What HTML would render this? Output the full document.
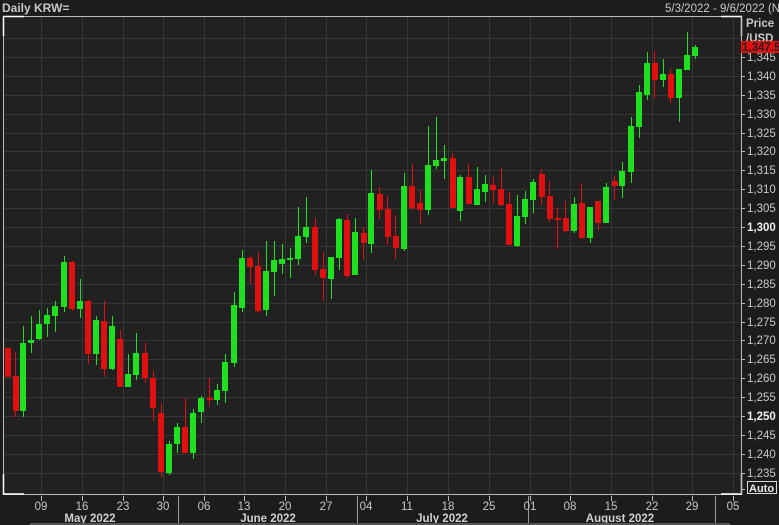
<!DOCTYPE html>
<html><head><meta charset="utf-8"><style>
html,body{margin:0;padding:0;background:#1c1c1c;width:779px;height:525px;overflow:hidden}
svg{display:block;font-family:"Liberation Sans",sans-serif}
</style></head><body>
<svg width="779" height="525" viewBox="0 0 779 525" xmlns="http://www.w3.org/2000/svg">
<rect width="779" height="525" fill="#1c1c1c"/>
<rect x="3" y="16" width="738" height="478" fill="#212121"/>
<g stroke="#363636" stroke-width="1">
<path d="M3 38.5H741M3 57.5H741M3 76.5H741M3 95.5H741M3 114.5H741M3 133.5H741M3 151.5H741M3 170.5H741M3 189.5H741M3 208.5H741M3 227.5H741M3 246.5H741M3 265.5H741M3 284.5H741M3 303.5H741M3 322.5H741M3 340.5H741M3 359.5H741M3 378.5H741M3 397.5H741M3 416.5H741M3 435.5H741M3 454.5H741M3 473.5H741"/>
<path d="M41.5 16V494M82.5 16V494M123.5 16V494M163.5 16V494M204.5 16V494M244.5 16V494M285.5 16V494M326.5 16V494M366.5 16V494M407.5 16V494M448.5 16V494M489.5 16V494M530.5 16V494M570.5 16V494M611.5 16V494M652.5 16V494M692.5 16V494M733.5 16V494"/>
</g>
<g stroke="#bbb" fill="none">
<path d="M3.5 494V16.5H741.5V494.5H3.5"/>
</g>
<g stroke="#fff" stroke-width="1.5" fill="none">
<path d="M3.5 36V16.5H24M721 16.5H741.5V36M3.5 474V494H24M721 494H741.5V474"/>
</g>
<!-- red wicks -->
<g stroke="#e01010" stroke-width="1">
<path d="M7.5 348V377M15.5 352V417M72.5 261V311M88.5 300V364M104.5 301V377M120.5 330V387M145.5 343V383M153.5 371V421M161.5 403V477M185.5 398V453M209.5 378V407M250.5 256V284M258.5 252V313M315.5 218V275M323.5 252V301M347.5 214V278M363.5 227V260M379.5 187V219M387.5 196V245M395.5 215V259M412.5 164V210M420.5 190V224M452.5 153V208M468.5 164V205M493.5 177V203M501.5 168V206M509.5 192V245M541.5 169V205M549.5 181V222M557.5 207V249M565.5 201V233M581.5 183V238M598.5 201V230M614.5 176V200M654.5 51V98M670.5 69V103"/>
</g>
<g fill="#e01010">
<rect x="5" y="348" width="6" height="29"/><rect x="13" y="376" width="6" height="35"/><rect x="69" y="262" width="6" height="47"/><rect x="85" y="301" width="6" height="53"/><rect x="101" y="321" width="6" height="48"/><rect x="117" y="339" width="6" height="48"/><rect x="142" y="353" width="6" height="25"/><rect x="150" y="378" width="6" height="30"/><rect x="158" y="413" width="6" height="59"/><rect x="182" y="427" width="6" height="26"/><rect x="207" y="398" width="6" height="2"/><rect x="247" y="258" width="6" height="9"/><rect x="255" y="266" width="6" height="45"/><rect x="312" y="227" width="6" height="43"/><rect x="320" y="269" width="6" height="9"/><rect x="344" y="220" width="6" height="56"/><rect x="361" y="233" width="6" height="10"/><rect x="377" y="194" width="6" height="16"/><rect x="385" y="209" width="6" height="28"/><rect x="393" y="236" width="6" height="12"/><rect x="409" y="186" width="6" height="22"/><rect x="417" y="203" width="6" height="7"/><rect x="450" y="158" width="6" height="50"/><rect x="466" y="177" width="6" height="27"/><rect x="490" y="185" width="6" height="5"/><rect x="498" y="189" width="6" height="16"/><rect x="506" y="204" width="6" height="41"/><rect x="539" y="174" width="6" height="23"/><rect x="547" y="196" width="6" height="23"/><rect x="555" y="218" width="6" height="2"/><rect x="563" y="218" width="6" height="13"/><rect x="579" y="203" width="6" height="35"/><rect x="595" y="201" width="6" height="22"/><rect x="612" y="181" width="6" height="5"/><rect x="652" y="63" width="6" height="17"/><rect x="668" y="74" width="6" height="24"/>
</g>
<!-- green wicks -->
<g stroke="#1ee01e" stroke-width="1">
<path d="M23.5 326V417M31.5 316V353M39.5 310V340M47.5 308V337M55.5 301V332M64.5 256V312M80.5 279V318M96.5 316V365M112.5 316V370M128.5 354V387M136.5 333V380M169.5 441V475M177.5 423V453M193.5 409V459M201.5 396V423M217.5 384V405M225.5 354V403M234.5 292V367M242.5 250V312M266.5 241V316M274.5 241V296M282.5 244V274M290.5 248V278M298.5 207V265M306.5 197V243M331.5 257V299M339.5 218V270M355.5 218V275M371.5 170V253M404.5 173V251M428.5 126V215M436.5 117V169M444.5 145V179M460.5 175V221M477.5 167V205M485.5 175V202M517.5 195V247M525.5 191V224M533.5 179V213M574.5 197V233M590.5 207V243M606.5 183V223M622.5 162V198M631.5 117V183M639.5 85V138M647.5 52V100M663.5 59V87M679.5 69V122M687.5 32V70M695.5 45V59"/>
</g>
<g fill="#1ee01e">
<rect x="20" y="343" width="6" height="68"/><rect x="28" y="340" width="6" height="3"/><rect x="36" y="324" width="6" height="15"/><rect x="44" y="315" width="6" height="9"/><rect x="52" y="306" width="6" height="10"/><rect x="61" y="262" width="6" height="45"/><rect x="77" y="301" width="6" height="8"/><rect x="93" y="320" width="6" height="34"/><rect x="109" y="326" width="6" height="43"/><rect x="125" y="374" width="6" height="13"/><rect x="133" y="353" width="6" height="22"/><rect x="166" y="444" width="6" height="29"/><rect x="174" y="427" width="6" height="17"/><rect x="190" y="413" width="6" height="40"/><rect x="198" y="398" width="6" height="14"/><rect x="214" y="390" width="6" height="10"/><rect x="222" y="362" width="6" height="29"/><rect x="231" y="305" width="6" height="58"/><rect x="239" y="258" width="6" height="50"/><rect x="263" y="271" width="6" height="39"/><rect x="271" y="260" width="6" height="12"/><rect x="279" y="259" width="6" height="5"/><rect x="287" y="258" width="6" height="2"/><rect x="295" y="236" width="6" height="23"/><rect x="303" y="227" width="6" height="10"/><rect x="328" y="257" width="6" height="22"/><rect x="336" y="219" width="6" height="39"/><rect x="352" y="232" width="6" height="43"/><rect x="368" y="193" width="6" height="51"/><rect x="401" y="186" width="6" height="63"/><rect x="425" y="165" width="6" height="45"/><rect x="433" y="160" width="6" height="6"/><rect x="441" y="158" width="6" height="3"/><rect x="457" y="177" width="6" height="34"/><rect x="474" y="189" width="6" height="16"/><rect x="482" y="184" width="6" height="8"/><rect x="514" y="216" width="6" height="30"/><rect x="522" y="199" width="6" height="18"/><rect x="530" y="182" width="6" height="18"/><rect x="571" y="204" width="6" height="27"/><rect x="587" y="207" width="6" height="31"/><rect x="603" y="187" width="6" height="36"/><rect x="619" y="171" width="6" height="15"/><rect x="628" y="126" width="6" height="46"/><rect x="636" y="92" width="6" height="35"/><rect x="644" y="63" width="6" height="32"/><rect x="660" y="74" width="6" height="6"/><rect x="676" y="69" width="6" height="29"/><rect x="684" y="55" width="6" height="15"/><rect x="692" y="47" width="6" height="9"/>
</g>
<!-- header -->
<text x="2" y="12" fill="#c8c8c8" font-size="12" font-weight="bold">Daily KRW=</text>
<text x="665" y="12" fill="#c8c8c8" font-size="11.5">5/3/2022 - 9/6/2022 (NY)</text>
<!-- right axis -->
<g stroke="#bbb"><path d="M741.5 16V494"/>
<path d="M741 57.5H745M741 76.5H745M741 95.5H745M741 114.5H745M741 133.5H745M741 151.5H745M741 170.5H745M741 189.5H745M741 208.5H745M741 227.5H745M741 246.5H745M741 265.5H745M741 284.5H745M741 303.5H745M741 322.5H745M741 340.5H745M741 359.5H745M741 378.5H745M741 397.5H745M741 416.5H745M741 435.5H745M741 454.5H745M741 473.5H745M741 489.5H745"/></g>
<g fill="#c8c8c8" font-size="11.5">
<text x="746" y="27" font-weight="bold">Price</text>
<text x="746" y="42" font-weight="bold">/USD</text>
<text x="747" y="61">1,345</text><text x="747" y="80">1,340</text><text x="747" y="99">1,335</text><text x="747" y="118">1,330</text><text x="747" y="137">1,325</text><text x="747" y="155">1,320</text><text x="747" y="174">1,315</text><text x="747" y="193">1,310</text><text x="747" y="212">1,305</text><text x="747" y="231" font-weight="bold" fill="#eee">1,300</text><text x="747" y="250">1,295</text><text x="747" y="269">1,290</text><text x="747" y="288">1,285</text><text x="747" y="307">1,280</text><text x="747" y="326">1,275</text><text x="747" y="344">1,270</text><text x="747" y="363">1,265</text><text x="747" y="382">1,260</text><text x="747" y="401">1,255</text><text x="747" y="420" font-weight="bold" fill="#eee">1,250</text><text x="747" y="439">1,245</text><text x="747" y="458">1,240</text><text x="747" y="477">1,235</text>
</g>
<rect x="741" y="41" width="38" height="12" fill="#e01010"/>
<text x="742" y="51" fill="#222" font-size="11.5" font-weight="bold">1,347.5</text>
<rect x="747.5" y="481.5" width="29" height="12" fill="none" stroke="#ddd"/>
<text x="749" y="492" fill="#e8e8e8" font-size="11" font-weight="bold">Auto</text>
<!-- bottom axis -->
<g stroke="#bbb"><path d="M41.5 496V501M82.5 496V501M123.5 496V501M163.5 496V501M204.5 496V501M244.5 496V501M285.5 496V501M326.5 496V501M366.5 496V501M407.5 496V501M448.5 496V501M489.5 496V501M530.5 496V501M570.5 496V501M611.5 496V501M652.5 496V501M692.5 496V501M733.5 496V501"/>
<path d="M178.5 496V525M357.5 496V525M528.5 496V525M715.5 496V525" stroke="#999"/></g>
<g fill="#c8c8c8" font-size="11.5" text-anchor="middle">
<text x="41" y="510">09</text><text x="82" y="510">16</text><text x="123" y="510">23</text><text x="163" y="510">30</text><text x="204" y="510">06</text><text x="244" y="510">13</text><text x="285" y="510">20</text><text x="326" y="510">27</text><text x="366" y="510">04</text><text x="407" y="510">11</text><text x="448" y="510">18</text><text x="489" y="510">25</text><text x="530" y="510">01</text><text x="570" y="510">08</text><text x="611" y="510">15</text><text x="652" y="510">22</text><text x="692" y="510">29</text><text x="733" y="510">05</text>
</g>
<g fill="#d0d0d0" font-size="11.5" font-weight="bold" text-anchor="middle">
<text x="90" y="522">May 2022</text><text x="268" y="522">June 2022</text><text x="442" y="522">July 2022</text><text x="620" y="522">August 2022</text>
</g>
<rect x="30" y="523" width="700" height="2" fill="#555"/>
</svg>
</body></html>
